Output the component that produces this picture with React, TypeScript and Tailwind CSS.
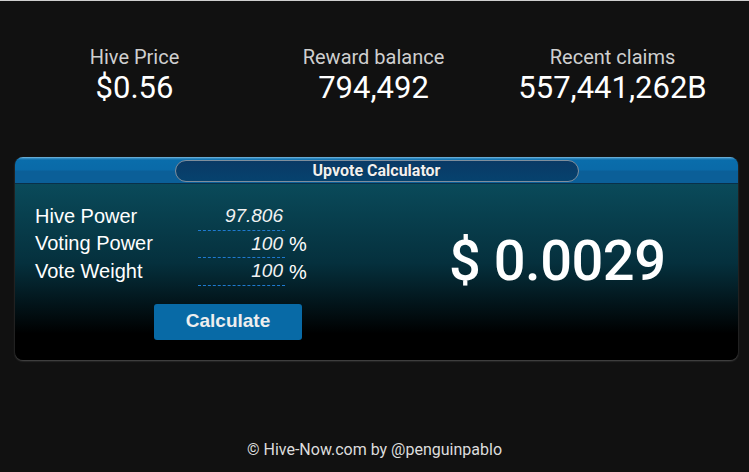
import React from "react";

const stats = [
  { label: "Hive Price", value: "$0.56" },
  { label: "Reward balance", value: "794,492" },
  { label: "Recent claims", value: "557,441,262B" },
];

const rows = [
  { label: "Hive Power", value: "97.806", unit: "" },
  { label: "Voting Power", value: "100", unit: "%" },
  { label: "Vote Weight", value: "100", unit: "%" },
];

export default function App() {
  return (
    <div
      className="min-h-[472px] w-[749px] bg-[#111111] border-t border-[#cfcfcf] flex flex-col"
      style={{ fontFamily: "Roboto, 'Liberation Sans', sans-serif" }}
    >
      <div className="pl-[15px] pt-[44px] flex">
        {stats.map((s) => (
          <div key={s.label} className="w-[239px] flex flex-col items-center">
            <div className="text-[20px] leading-[24px] text-[#cfcfcf]">{s.label}</div>
            <div className="text-[31px] leading-[36px] text-white mt-[1px]">{s.value}</div>
          </div>
        ))}
      </div>

      <div className="ml-[15px] mt-[51px] w-[723px] rounded-[8px] overflow-hidden shadow-[0_1px_2px_rgba(120,120,120,0.6)]">
        <div className="relative h-[27px] bg-[linear-gradient(to_bottom,#8fc3e0_0px,#3a92c8_1px,#0a6dab_3px,#0a6aa8_13px,#0b5f98_14px,#0b5f98_26px,#0a3048_26px)] flex items-center justify-center">
          <div className="w-[404px] h-[22px] rounded-full border border-[#7f8e9c] bg-[linear-gradient(to_bottom,#0a3a66,#06426e)] flex items-center justify-center">
            <span
              className="text-[16px] font-bold text-[#f0f0f0] leading-none"
              style={{ textShadow: "0 0 1px rgba(0,0,0,0.6)" }}
            >
              Upvote Calculator
            </span>
          </div>
        </div>
        <div className="h-[176px] bg-[linear-gradient(to_bottom,#0a4a5a,#05303d_45%,#000000_85%,#000000)] grid grid-cols-2">
          <div
            className="pl-[20px] pt-[19px]"
            style={{ fontFamily: "'Liberation Sans', Arial, sans-serif" }}
          >
            {rows.map((r) => (
              <div key={r.label} className="flex items-end h-[27.5px]">
                <div className="w-[163px] text-[20px] leading-[30px] text-white">{r.label}</div>
                <div className="w-[87px] h-[27.5px] border-b border-dashed border-[#1e7ad0] flex items-center justify-end pr-[2px]">
                  <span className="italic text-[19px] leading-[26px] text-[#f2f2f2]">{r.value}</span>
                </div>
                {r.unit && (
                  <div className="ml-[4px] text-[20px] leading-[26px] text-white self-center">{r.unit}</div>
                )}
              </div>
            ))}
            <button className="mt-[18px] ml-[119px] w-[148px] h-[36px] rounded-[3px] bg-[#086aa6] text-[19px] font-bold text-[#eeeeee]">
              Calculate
            </button>
          </div>
          <div className="flex justify-center pt-[49px]">
            <div className="text-[56px] leading-none font-medium text-white tracking-[-0.5px]">$ 0.0029</div>
          </div>
        </div>
      </div>

      <div className="mt-auto pb-[12px] text-center text-[16px] leading-[20px] text-[#dddddd]">
        © Hive-Now.com by @penguinpablo
      </div>
    </div>
  );
}
